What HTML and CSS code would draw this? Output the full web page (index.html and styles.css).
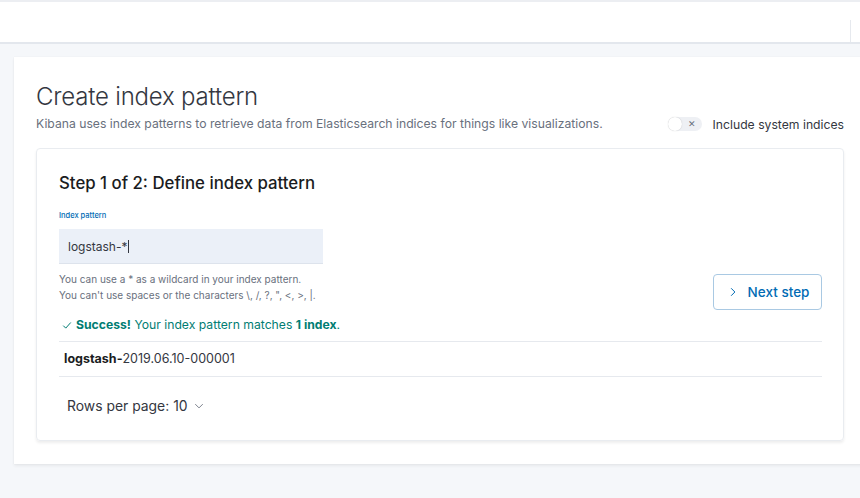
FILE: index.html
```html
<!DOCTYPE html>
<html>
<head>
<meta charset="utf-8">
<link rel="stylesheet" href="styles.css">
</head>
<body>
<div class="topbar"><div class="topbar-end"></div></div>
<div class="page">
  <div class="panel">
    <div class="header">
      <div class="header-text">
        <h1 class="title">Create index pattern</h1>
        <p class="subtitle">Kibana uses index patterns to retrieve data from Elasticsearch indices for things like visualizations.</p>
      </div>
      <div class="switch-wrap">
        <span class="switch"><span class="thumb"></span><span class="switch-x">✕</span></span>
        <span class="switch-label">Include system indices</span>
      </div>
    </div>
    <div class="card">
      <h2 class="step">Step 1 of 2: Define index pattern</h2>
      <div class="form-row">
        <div class="form-col">
          <div class="label">Index pattern</div>
          <div class="input">logstash-*<span class="caret"></span></div>
          <div class="help">You can use a * as a wildcard in your index pattern.<br>You can't use spaces or the characters \, /, ?, ", &lt;, &gt;, |.</div>
        </div>
        <button class="next">
          <svg width="10" height="10" viewBox="0 0 16 16"><path d="M5 2l6 6-6 6" fill="none" stroke="#006bb4" stroke-width="1.6"/></svg>
          <span>Next step</span>
        </button>
      </div>
      <div class="success">
        <svg width="10" height="10" viewBox="0 0 16 16"><path d="M2 9l4 4 8-9" fill="none" stroke="#017d73" stroke-width="1.6"/></svg>
        <span><b>Success!</b> Your index pattern matches <b>1 index</b>.</span>
      </div>
      <div class="table">
        <div class="row"><b>logstash-</b>2019.06.10-000001</div>
      </div>
      <div class="rows">Rows per page: 10
        <svg width="10" height="10" viewBox="0 0 16 16"><path d="M2 5l6 6 6-6" fill="none" stroke="#69707d" stroke-width="1.4"/></svg>
      </div>
    </div>
  </div>
</div>
</body>
</html>
```
FILE: styles.css
```css
* { box-sizing: border-box; }
html, body { margin: 0; padding: 0; }
body {
  font-family: Inter, "Noto Sans", sans-serif;
  background: #f5f7fa;
  width: 860px;
  height: 498px;
  overflow: hidden;
  color: #343741;
}
.topbar {
  height: 44px;
  background: #fff;
  border-top: 2px solid #eceef2;
  border-bottom: 2px solid #e3e7ed;
  display: flex;
  justify-content: flex-end;
}
.topbar-end {
  width: 10px;
  margin-top: 18px;
  border-left: 1px solid #e6e9ee;
}
.page {
  padding: 13px 0 0 14px;
}
.panel {
  background: #fff;
  margin-right: -10px;
  padding: 25px 26px 23px 22px;
  box-shadow: 0 2px 3px rgba(0,0,0,0.06), 0 0 1px rgba(0,0,0,0.08);
}
.header {
  display: flex;
  align-items: flex-end;
  justify-content: space-between;
}
.title {
  margin: 0;
  font-size: 24px;
  font-weight: 300;
  line-height: 30px;
  color: #343741;
  letter-spacing: -0.2px;
}
.subtitle {
  margin: 4px 0 0;
  font-size: 12.2px;
  line-height: 16px;
  color: #69707d;
}
.switch-wrap {
  display: flex;
  align-items: center;
  gap: 11px;
  height: 16px;
}
.switch {
  position: relative;
  width: 34px;
  height: 14px;
  border-radius: 7px;
  background: #eef0f4;
  display: inline-block;
}
.thumb {
  position: absolute;
  left: 0;
  top: 0;
  width: 14px;
  height: 14px;
  border-radius: 50%;
  background: #fff;
  box-shadow: 0 0 1px rgba(0,0,0,0.25);
}
.switch-x {
  position: absolute;
  right: 6px;
  top: 0;
  font-size: 9px;
  line-height: 14px;
  color: #69707d;
}
.switch-label {
  font-size: 12.2px;
  color: #343741;
}
.card {
  margin-top: 16px;
  border: 1px solid #e9ecf0;
  border-radius: 4px;
  box-shadow: 0 2px 3px rgba(0,0,0,0.07);
  padding: 23px 21px 24px 22px;
}
.step {
  margin: 0;
  font-size: 16.8px;
  font-weight: 500;
  line-height: 22px;
  color: #1a1c21;
}
.form-row {
  margin-top: 16px;
  display: flex;
  justify-content: space-between;
  align-items: flex-end;
}
.label {
  font-size: 7.5px;
  line-height: 12px;
  color: #006bb4;
  font-weight: 500;
}
.input {
  margin-top: 7px;
  width: 264px;
  height: 35px;
  background: #ebf0f8;
  border-bottom: 1px solid #dde3ec;
  font-size: 12px;
  line-height: 35px;
  padding-left: 9px;
  color: #343741;
}
.caret {
  display: inline-block;
  width: 1px;
  height: 13px;
  background: #343741;
  vertical-align: -2px;
  margin-left: 1px;
}
.help {
  margin-top: 7px;
  font-size: 10px;
  line-height: 16px;
  color: #69707d;
}
.next {
  margin-bottom: -7px;
  width: 109px;
  height: 36px;
  border: 1px solid #a9c9e3;
  border-radius: 4px;
  background: #fff;
  display: flex;
  align-items: center;
  justify-content: center;
  gap: 10px;
  font-family: inherit;
  font-size: 13.5px;
  font-weight: 500;
  color: #006bb4;
  padding: 0 0 0 2px;
}
.success {
  margin-top: 14px;
  display: flex;
  align-items: center;
  gap: 4px;
  padding-left: 3px;
  font-size: 12.2px;
  line-height: 16px;
  color: #017d73;
}
.success b { font-weight: 700; }
.table {
  margin-top: 8px;
  border-top: 1px solid #e6e9ee;
  border-bottom: 1px solid #e6e9ee;
}
.row {
  height: 34px;
  line-height: 34px;
  padding-left: 5px;
  font-size: 12.5px;
  color: #343741;
}
.row b { font-weight: 700; color: #1a1c21; }
.rows {
  margin-top: 19px;
  padding-left: 8px;
  font-size: 13.9px;
  line-height: 20px;
  color: #343741;
  display: flex;
  align-items: center;
  gap: 6px;
}
```
